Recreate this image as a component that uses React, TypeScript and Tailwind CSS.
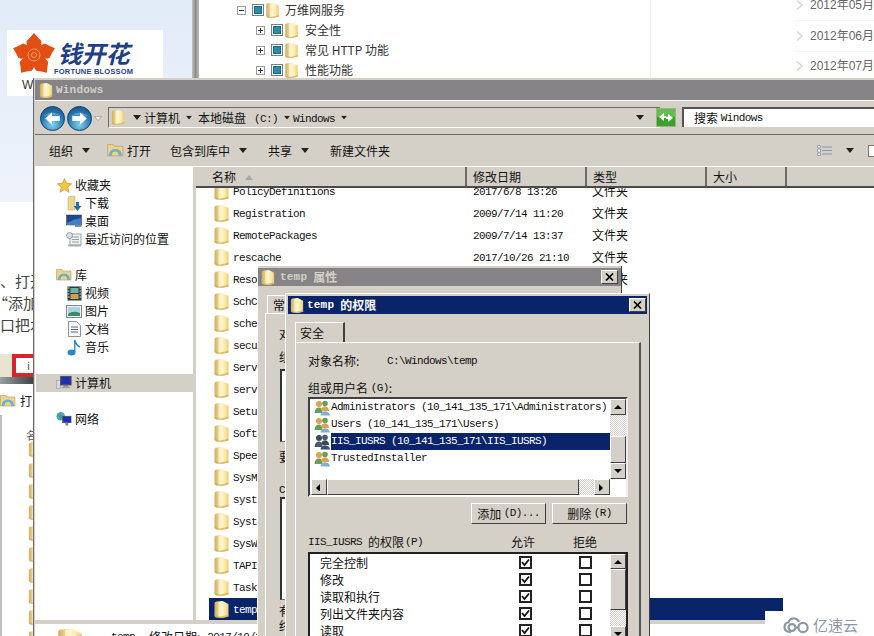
import React, { useId } from "react";

const mono = "font-['Liberation_Mono','Noto_Sans_CJK_SC',monospace] text-[11px] tracking-[-0.6px]";
const titleMono = "font-['Liberation_Mono','Noto_Sans_CJK_SC',monospace] text-[11px] font-bold tracking-[0.2px]";
const raised = "border border-t-white border-l-white border-r-[#404040] border-b-[#404040] bg-[#d4d0c8]";
const dither = "bg-[repeating-conic-gradient(#d4d0c8_0_25%,#ffffff_0_50%)] bg-[length:2px_2px]";

function L({ children, className = "" }: { children: React.ReactNode; className?: string }) {
  return <span className={`${mono} ${className}`}>{children}</span>;
}

function Folder({ w = 17, h = 19 }: { w?: number; h?: number }) {
  const id = useId();
  return (
    <svg width={w} height={h} viewBox="0 0 16 19" className="shrink-0">
      <defs>
        <linearGradient id={id} x1="0" x2="1" y1="0" y2="0">
          <stop offset="0" stopColor="#d0ae60" />
          <stop offset="0.28" stopColor="#ead08a" />
          <stop offset="0.5" stopColor="#fdf4c8" />
          <stop offset="0.75" stopColor="#faeaaa" />
          <stop offset="1" stopColor="#edca74" />
        </linearGradient>
      </defs>
      <path d="M1 3.5Q1 1.5 3 1.5L9 1L15 4V16.5L9 18L3 17.5Q1 17.5 1 15.5Z" fill={`url(#${id})`} />
      <path d="M1 14.5Q6 18 15 14.5V16.5L9 18L3 17.5Q1 17 1 15Z" fill="#d2ac52" opacity=".7" />
      <path d="M5 2L9 1V16L5 17Z" fill="#fff8d8" opacity=".6" />
    </svg>
  );
}

function CloseBtn({ className = "" }: { className?: string }) {
  return (
    <div className={`${raised} w-[17px] h-[14px] flex items-center justify-center shrink-0 ${className}`}>
      <svg width="9" height="8" viewBox="0 0 9 8">
        <path d="M1 0.5L8 7.5M8 0.5L1 7.5" stroke="#000" strokeWidth="1.6" />
      </svg>
    </div>
  );
}

function Tri({ dir }: { dir: "up" | "down" | "left" | "right" }) {
  const d = { up: "M0 5L4 1L8 5Z", down: "M0 1L8 1L4 5Z", left: "M5 0V8L1 4Z", right: "M1 0V8L5 4Z" }[dir];
  return (
    <svg width="8" height="8" viewBox="0 0 8 6">
      <path d={d} fill="#000" />
    </svg>
  );
}

function SBtn({ dir, className = "" }: { dir: "up" | "down" | "left" | "right"; className?: string }) {
  return <div className={`${raised} flex items-center justify-center shrink-0 ${className}`}><Tri dir={dir} /></div>;
}

function Caret() {
  return (
    <svg width="8" height="5" viewBox="0 0 8 5" className="shrink-0">
      <path d="M0 0H8L4 5Z" fill="#222" />
    </svg>
  );
}

function TreeCheck() {
  return (
    <span className="w-[12px] h-[12px] border border-[#6f7f8c] bg-white p-[1px] shrink-0 flex">
      <span className="flex-1 bg-[#2f8aa8] border border-[#1b6a88]" />
    </span>
  );
}

function Expander({ minus }: { minus?: boolean }) {
  return (
    <span className="w-[9px] h-[9px] border border-[#9a9a9a] bg-white shrink-0 flex items-center justify-center relative">
      <svg width="7" height="7" viewBox="0 0 7 7">
        <path d={minus ? "M1 3.5H6" : "M1 3.5H6M3.5 1V6"} stroke="#333" strokeWidth="1" />
      </svg>
    </span>
  );
}

function TreeRow({ label, top }: { label: React.ReactNode; top?: boolean }) {
  return (
    <div className={`h-[20px] shrink-0 flex items-center text-[12px] text-[#333] ${top ? "pl-[38px]" : "pl-[57px]"}`}>
      <Expander minus={top} />
      <span className="ml-[6px]"><TreeCheck /></span>
      <span className="ml-[1px]"><Folder w={15} h={17} /></span>
      <span className={top ? "ml-[5px]" : "ml-[6px]"}>{label}</span>
    </div>
  );
}

function NavArrow({ flip }: { flip?: boolean }) {
  const id = useId();
  return (
    <svg width="25" height="25" viewBox="0 0 26 26" className="shrink-0">
      <defs>
        <radialGradient id={id} cx="0.5" cy="0.75" r="0.8">
          <stop offset="0" stopColor="#7fd3f0" />
          <stop offset="0.55" stopColor="#2a7fb8" />
          <stop offset="1" stopColor="#1a4d86" />
        </radialGradient>
      </defs>
      <circle cx="13" cy="13" r="12.5" fill={`url(#${id})`} stroke="#16406f" />
      <path d="M3 11Q13 3 23 11Q13 7 3 11Z" fill="#fff" opacity=".25" />
      <path
        transform={flip ? "rotate(180 13 13)" : undefined}
        d="M5.5 13L12.5 6.5V10.5H20.5V15.5H12.5V19.5Z"
        fill="#fff"
      />
    </svg>
  );
}

function Star() {
  return (
    <svg width="15" height="15" viewBox="0 0 15 15">
      <path d="M7.5 0.5L9.6 5.3L14.7 5.8L10.8 9.2L12 14.3L7.5 11.6L3 14.3L4.2 9.2L0.3 5.8L5.4 5.3Z" fill="#f4c544" stroke="#c4862a" strokeWidth=".6" />
    </svg>
  );
}
function DownloadIcon() {
  return (
    <svg width="15" height="17" viewBox="0 0 15 17">
      <path d="M1 2L8 1V15H1Z" fill="#ecd88c" stroke="#c9a24e" strokeWidth=".5" />
      <path d="M9 7H12V11H14.5L10.5 16L6.5 11H9Z" fill="#1f6fb8" />
    </svg>
  );
}
function DesktopIcon() {
  return (
    <svg width="16" height="14" viewBox="0 0 16 14">
      <rect x="0.5" y="1" width="15" height="10" fill="#20488c" stroke="#334" strokeWidth=".5" />
      <path d="M1 9Q8 5 15 4V11H1Z" fill="#3f7fc8" />
      <rect x="9" y="11" width="6.5" height="2" fill="#7a8a9c" />
    </svg>
  );
}
function RecentIcon() {
  return (
    <svg width="16" height="15" viewBox="0 0 16 15">
      <rect x="4" y="2" width="11" height="11" fill="#f0f2f2" stroke="#8a9498" strokeWidth=".8" />
      <path d="M6 5H13M6 7.5H13M6 10H13" stroke="#8fa0a8" />
      <circle cx="3.5" cy="3.5" r="3" fill="#d9dfe0" stroke="#7d878c" strokeWidth=".7" />
      <rect x="2" y="12.5" width="13" height="2" fill="#a8b0b0" />
    </svg>
  );
}
function LibraryIcon() {
  return (
    <svg width="16" height="14" viewBox="0 0 16 14">
      <path d="M0.5 3V1.5H6L7 3H15V12H0.5Z" fill="#ecd48a" stroke="#b89a50" strokeWidth=".6" />
      <path d="M1.5 12Q2 5.5 8 5.5Q14 5.5 14 12H11Q11 8 8 8Q4.5 8 4.5 12Z" fill="#6fb0cf" />
    </svg>
  );
}
function VideoIcon() {
  return (
    <svg width="15" height="15" viewBox="0 0 15 15">
      <rect x="0.5" y="0.5" width="14" height="14" fill="#2c3a44" />
      <rect x="3.5" y="2" width="8" height="5" fill="#6fb4a0" />
      <rect x="3.5" y="8" width="8" height="5" fill="#d0a050" />
      <path d="M1 2H2.5M1 5H2.5M1 8H2.5M1 11H2.5M12.5 2H14M12.5 5H14M12.5 8H14M12.5 11H14" stroke="#e6e6e6" />
    </svg>
  );
}
function PictureIcon() {
  return (
    <svg width="16" height="13" viewBox="0 0 16 13">
      <rect x="0.5" y="0.5" width="15" height="12" fill="#eef2f2" stroke="#7d878c" />
      <rect x="2" y="2" width="12" height="9" fill="#a9d4e8" />
      <path d="M2 9Q7 5 14 8V11H2Z" fill="#3f8a62" />
    </svg>
  );
}
function DocIcon() {
  return (
    <svg width="13" height="16" viewBox="0 0 13 16">
      <path d="M0.5 0.5H8.5L12.5 4.5V15.5H0.5Z" fill="#f7f8f8" stroke="#8a9498" />
      <path d="M3 6H10M3 8.5H10M3 11H10" stroke="#5a6a7c" />
    </svg>
  );
}
function MusicIcon() {
  return (
    <svg width="14" height="17" viewBox="0 0 14 17">
      <ellipse cx="4.5" cy="13.5" rx="4" ry="3" fill="#2a86c8" />
      <path d="M7.8 13V1Q9 6 13 8" stroke="#2a86c8" strokeWidth="1.4" fill="none" />
    </svg>
  );
}
function ComputerIcon() {
  return (
    <svg width="17" height="16" viewBox="0 0 17 16">
      <rect x="0.5" y="5" width="4" height="9" fill="#d8d8d8" stroke="#888" strokeWidth=".5" />
      <rect x="5" y="1" width="11" height="9" fill="#1e2fb0" stroke="#4a4a5a" />
      <rect x="8" y="10" width="5" height="2" fill="#7a7f8c" />
      <rect x="6" y="12" width="9" height="1.5" fill="#9aa0aa" />
    </svg>
  );
}
function NetworkIcon() {
  return (
    <svg width="17" height="16" viewBox="0 0 17 16">
      <circle cx="5" cy="5" r="4.5" fill="#4aa0d8" />
      <path d="M2 3Q5 2 6 5T4 8Z" fill="#4aa84a" />
      <rect x="7" y="5" width="9" height="7" fill="#1e2fb0" stroke="#555" strokeWidth=".6" />
      <rect x="10" y="12" width="3" height="3" fill="#7a8a9c" />
    </svg>
  );
}

function NavRow({ icon, label, indent }: { icon: React.ReactNode; label: string; indent?: boolean }) {
  return (
    <div className={`h-[18px] flex items-center text-[12px] text-[#111] ${indent ? "pl-[30px]" : "pl-[20px]"}`}>
      <span className="w-[16px] flex justify-center">{icon}</span>
      <span className={indent ? "ml-[3px]" : "ml-[3px]"}>{label}</span>
    </div>
  );
}

function FileRow({ name, date, type, selected }: { name: string; date?: string; type?: string; selected?: boolean }) {
  return (
    <div className={`h-[22px] w-[574px] flex items-center shrink-0 ${selected ? "bg-[#0a246a] text-white" : "text-[#111]"}`}>
      <span className="ml-[4px]"><Folder /></span>
      <span className="ml-[3px] w-[240px]"><L>{name}</L></span>
      {date && <span className="w-[119px]"><L>{date}</L></span>}
      {type && <span className="text-[12px]">{type}</span>}
    </div>
  );
}

function ColHead({ label, w, pl = 6, children }: { label: string; w: number; pl?: number; children?: React.ReactNode }) {
  return (
    <div style={{ width: w, paddingLeft: pl }} className="h-full flex items-center pt-[1px] text-[12px] text-[#111] border-r-2 border-r-[#6c6a66] shrink-0">
      {label}
      {children}
    </div>
  );
}

function Users({ dark }: { dark?: boolean }) {
  const a = dark ? "#3c4a58" : "#d9a350";
  const b = dark ? "#4a5870" : "#6a9e58";
  const c = dark ? "#33506e" : "#7fb0d0";
  return (
    <svg width="17" height="16" viewBox="0 0 17 16" className="shrink-0">
      <circle cx="5" cy="4" r="3" fill={a} />
      <path d="M0.5 13Q1 7.5 5 7.5Q8 7.5 8.5 12V13Z" fill={b} />
      <circle cx="11" cy="3.5" r="2.8" fill={b} />
      <path d="M7 10Q7.5 6.5 11 6.5Q15 6.5 15 11H9Z" fill={a} />
      <circle cx="11" cy="9" r="2.5" fill={a} />
      <path d="M6.5 15.5Q7 11.5 11 11.5Q15.5 11.5 16 15.5Z" fill={c} />
    </svg>
  );
}

function UserRow({ name, selected, dark }: { name: string; selected?: boolean; dark?: boolean }) {
  return (
    <div className="h-[17px] flex items-center pl-[4px]">
      <Users dark={dark} />
      <div className={`flex-1 h-full flex items-center ${selected ? "bg-[#0a246a] text-white" : "text-[#111]"}`}>
        <L>{name}</L>
      </div>
    </div>
  );
}

function Box({ checked }: { checked?: boolean }) {
  return (
    <span className="w-[13px] h-[13px] border-2 border-[#222] bg-white flex items-center justify-center shrink-0">
      {checked && (
        <svg width="9" height="9" viewBox="0 0 9 9">
          <path d="M1 4L3.5 7L8 1.5" fill="none" stroke="#111" strokeWidth="1.8" />
        </svg>
      )}
    </span>
  );
}

function PermRow({ label }: { label: string }) {
  return (
    <div className="h-[17px] shrink-0 flex items-center text-[12px] text-[#111]">
      <span className="w-[209px] pl-[10px]">{label}</span>
      <Box checked />
      <span className="ml-[47px]"><Box /></span>
    </div>
  );
}

function Flower() {
  return (
    <svg width="46" height="46" viewBox="0 0 46 46" className="shrink-0">
      {[0, 72, 144, 216, 288].map((r) => (
        <path key={r} transform={`rotate(${r} 23 23)`} d="M23 23Q15 16 15.5 9Q19 6 23 1Q27 6 30.5 9Q31 16 23 23Z" fill="#e34f12" />
      ))}
      <circle cx="23" cy="23" r="6" fill="#e34f12" stroke="#f6a26e" strokeWidth="1" />
      <circle cx="23" cy="23" r="2.5" fill="none" stroke="#f6a26e" strokeWidth="1" />
    </svg>
  );
}

function CloudLogo() {
  return (
    <svg width="27" height="17" viewBox="0 0 27 17" className="shrink-0">
      <path d="M8 15Q1.5 15 1.5 10Q1.5 6 5.5 5.5Q7 1 11.5 1.5Q15 2 16 5" fill="none" stroke="#8e97a6" strokeWidth="2.2" />
      <circle cx="9" cy="10.5" r="3.4" fill="none" stroke="#8e97a6" strokeWidth="2.2" />
      <circle cx="20" cy="10.5" r="4.6" fill="none" stroke="#8e97a6" strokeWidth="2.2" />
      <path d="M12 10.5H15.5" stroke="#8e97a6" strokeWidth="2.2" />
    </svg>
  );
}

export default function App() {
  return (
    <div className="relative w-[874px] h-[636px] overflow-hidden bg-white font-['Noto_Sans_CJK_SC',sans-serif] text-[12px] leading-none">
      {/* page behind */}
      <div className="absolute left-0 top-0 w-[192px] h-[636px] flex flex-col bg-white">
        <div className="h-[202px] bg-gradient-to-b from-[#e2ebf8] to-[#eef3fb] shrink-0 pt-[30px] pl-[7px]">
          <div className="w-[156px] h-[66px] bg-white flex items-start pl-[4px] pt-[2px] relative">
            <Flower />
            <div className="-ml-[3px] flex flex-col items-center">
              <span className="mt-[8px] text-[24px] leading-[26px] font-bold italic text-[#1f3f88]">钱开花</span>
              <span className="mt-[1px] text-[7.5px] leading-[9px] font-bold font-['Liberation_Sans',sans-serif] text-[#27458e] tracking-[0.2px] whitespace-nowrap">FORTUNE BLOSSOM</span>
            </div>
            <span className="absolute left-[15px] top-[49px] text-[12px] text-[#333] font-['Liberation_Sans',sans-serif]">W</span>
          </div>
        </div>
        <div className="pt-[68px] text-[15px] leading-[22px] text-[#444] whitespace-nowrap flex flex-col">
          <span>、打开</span>
          <span className="-ml-[7px]">“添加</span>
          <span>口把本</span>
        </div>
        <div className="mt-[18px] h-[23px] w-[33px] flex bg-[#e8e4d0] shrink-0">
          <span className="w-[12px] h-full" />
          <span className="flex-1 border-[4px] border-r-0 border-[#d9232e] bg-white pl-[11px] text-[11px] text-[#555] pt-[2px]">i</span>
        </div>
        <div className="h-[7px] w-[33px] bg-gradient-to-r from-[#99a2a0] to-[#3c4644] shrink-0" />
        <div className="mt-[6px] h-[22px] flex items-center text-[12px] text-[#222] shrink-0">
          <LibraryIcon />
          <span className="ml-[4px]">打</span>
        </div>
        <div className="flex flex-col pl-[26px] pt-[15px] border-l-2 border-l-[#c0c0c0] mt-[3px]">
          <span className="text-[11px] text-[#555] ml-[-2px] mb-[3px] h-[8px]">名</span>
          {[0, 1, 2, 3, 4, 5, 6, 7, 8, 9].map((i) => (
            <span key={i} className="h-[21px]"><Folder w={14} h={17} /></span>
          ))}
        </div>
      </div>

      <div className="absolute left-[192px] top-0 h-[78px] w-[7px] bg-gradient-to-r from-[#c0c0c0] via-[#8d8d8d] to-[#bcbcbc]" />

      <div className="absolute left-[199px] top-0 h-[78px] w-[675px] flex overflow-hidden">
        <div className="w-[458px] border-r border-r-[#eeeeee] flex flex-col">
          <TreeRow top label="万维网服务" />
          <TreeRow label="安全性" />
          <TreeRow label={<span>常见 HTTP 功能</span>} />
          <TreeRow label="性能功能" />
        </div>
        <div className="flex-1 pl-[145px] flex flex-col text-[12px] text-[#666] font-['Liberation_Sans','Noto_Sans_CJK_SC',sans-serif]">
          {["2012年05月", "2012年06月", "2012年07月"].map((t, i) => (
            <div key={t} className={`h-[30.5px] shrink-0 flex items-center gap-[7px] border-b border-b-[#f2f2f2] ${i === 0 ? "-mt-[9.5px]" : ""}`}>
              <svg width="7" height="10" viewBox="0 0 7 10"><path d="M1 0.5L6 5L1 9.5" fill="none" stroke="#d6d6d6" strokeWidth="1.5" /></svg>
              <span className="whitespace-nowrap">{t}</span>
            </div>
          ))}
        </div>
      </div>

      {/* Explorer window */}
      <div className="absolute left-[33px] top-[78px] w-[860px] h-[570px] border-l border-l-[#6c6a66] bg-[#d4d0c8] flex flex-col">
        <div className="h-[2px] bg-[#d4d0c8] shrink-0" />
        <div className="h-[20px] bg-[#858385] flex items-center pl-[4px] shrink-0 ml-[1px]">
          <Folder w={14} h={17} />
          <span className={`ml-[3px] text-[#d4d0c8] ${titleMono}`}>Windows</span>
        </div>
        {/* address */}
        <div className="h-[35px] shrink-0 border-t border-t-white border-b border-b-[#6c6a66] flex items-start pt-[6px] pl-[5px] ml-[1px]">
          <div className="flex items-center -mt-[1px] h-[24px]">
            <NavArrow />
            <span className="ml-[2px]"><NavArrow flip /></span>
            <svg width="8" height="5" viewBox="0 0 8 5" className="ml-[2px]"><path d="M0.5 0.5H7.5L4 4.5Z" fill="#eeeeee" stroke="#888" strokeWidth=".6" /></svg>
          </div>
          <div className="ml-[6px] w-[552px] h-[21px] border-l border-l-[#6c6a66] border-t border-t-[#6c6a66] border-b border-b-white flex items-center pl-[2px] text-[12px] text-[#111]">
            <Folder w={14} h={17} />
            <span className="ml-[8px]"><Caret /></span>
            <span className="ml-[3px]">计算机</span>
            <span className="ml-[5px] scale-75"><Caret /></span>
            <span className="ml-[5px]">本地磁盘</span>
            <span className="ml-[8px]"><L>(C:)</L></span>
            <span className="ml-[5px] scale-75"><Caret /></span>
            <span className="ml-[2px]"><L>Windows</L></span>
            <span className="ml-[5px] scale-75"><Caret /></span>
            <span className="ml-auto mr-[16px]"><Caret /></span>
          </div>
          <svg width="20" height="19" viewBox="0 0 20 19" className="ml-[-4px] mt-[1px] shrink-0">
            <rect x="0.5" y="0.5" width="19" height="18" fill="#3aa02a" stroke="#9ab08a" />
            <rect x="1" y="1" width="18" height="8" fill="#7fd06a" opacity=".6" />
            <path d="M3 9L8 5V8H10V10H8V13ZM17 10L12 14V11H10V9H12V6Z" fill="#fff" />
          </svg>
          <div className="ml-[6px] w-[200px] h-[20px] border-l-2 border-t-2 border-l-[#555] border-t-[#555] bg-white flex items-center pl-[10px] text-[12px] text-[#111] shrink-0">
            搜索&nbsp;<L>Windows</L>
          </div>
        </div>
        {/* toolbar */}
        <div className="h-[31px] shrink-0 flex items-center pl-[14px] text-[12px] text-[#111] ml-[1px]">
          <span>组织</span>
          <span className="ml-[9px]"><Caret /></span>
          <span className="ml-[17px]">
            <svg width="17" height="15" viewBox="0 0 16 14"><path d="M0.5 3V1.5H6L7 3H15V12H0.5Z" fill="#ecd48a" stroke="#b89a50" strokeWidth=".6" /><path d="M1.5 12Q2 5.5 8 5.5Q14 5.5 14 12H11Q11 8 8 8Q4.5 8 4.5 12Z" fill="#6fb0cf" /></svg>
          </span>
          <span className="ml-[3px]">打开</span>
          <span className="ml-[19px]">包含到库中</span>
          <span className="ml-[9px]"><Caret /></span>
          <span className="ml-[21px]">共享</span>
          <span className="ml-[9px]"><Caret /></span>
          <span className="ml-[21px]">新建文件夹</span>
          <div className="ml-auto mr-[13px] flex items-center">
            <svg width="16" height="11" viewBox="0 0 16 11"><path d="M0.5 0.5H3.5V3H0.5ZM0.5 4H3.5V7H0.5ZM0.5 8H3.5V10.5H0.5Z" fill="#fff" stroke="#7a8a9c" strokeWidth=".7" /><path d="M5 2H15M5 5.5H15M5 9H15" stroke="#8a97a6" /></svg>
            <span className="ml-[13px]"><Caret /></span>
            <span className="ml-[14px] w-[12px] h-[12px] border border-[#777] bg-white" />
          </div>
        </div>
        {/* main */}
        <div className="h-[454px] shrink-0 flex bg-white border-t border-t-white ml-[1px] pl-[1px]">
          <div className="w-[157px] shrink-0 pt-[9px] flex flex-col">
            <NavRow icon={<Star />} label="收藏夹" />
            <NavRow indent icon={<DownloadIcon />} label="下载" />
            <NavRow indent icon={<DesktopIcon />} label="桌面" />
            <NavRow indent icon={<RecentIcon />} label="最近访问的位置" />
            <div className="h-[18px]" />
            <NavRow icon={<LibraryIcon />} label="库" />
            <NavRow indent icon={<VideoIcon />} label="视频" />
            <NavRow indent icon={<PictureIcon />} label="图片" />
            <NavRow indent icon={<DocIcon />} label="文档" />
            <NavRow indent icon={<MusicIcon />} label="音乐" />
            <div className="h-[18px]" />
            <div className="bg-[#d4d0c8]"><NavRow icon={<ComputerIcon />} label="计算机" /></div>
            <div className="h-[18px]" />
            <NavRow icon={<NetworkIcon />} label="网络" />
          </div>
          <div className="w-[3px] bg-[#d4d0c8] shrink-0" />
          <div className="flex-1 flex flex-col min-w-0">
            <div className="h-[21px] bg-[#d4d0c8] flex items-center shrink-0 border-b-2 border-b-[#4a4a4a] relative z-10">
              <ColHead label="名称" w={271} pl={16}>
                <svg width="8" height="5" viewBox="0 0 8 5" className="ml-[9px]"><path d="M0 5L4 0L8 5Z" fill="#a8a8a8" /></svg>
              </ColHead>
              <ColHead label="修改日期" w={120} />
              <ColHead label="类型" w={120} />
              <ColHead label="大小" w={80} />
            </div>
            <div className="flex-1 overflow-hidden pl-[13px] flex flex-col">
              <div className="-mt-[8px]" />
              <FileRow name="PolicyDefinitions" date="2017/6/8 13:26" type="文件夹" />
              <FileRow name="Registration" date="2009/7/14 11:20" type="文件夹" />
              <FileRow name="RemotePackages" date="2009/7/14 13:37" type="文件夹" />
              <FileRow name="rescache" date="2017/10/26 21:10" type="文件夹" />
              <FileRow name="Resources" date="2009/7/14 13:37" type="文件夹" />
              {["SchCache", "schemas", "security", "ServiceProfiles", "servicing", "Setup", "SoftwareDistribution", "Speech", "SysMsgs", "system", "System32", "SysWOW64", "TAPI", "Tasks"].map((n) => (
                <FileRow key={n} name={n} />
              ))}
              <FileRow name="temp" selected />
            </div>
          </div>
        </div>
        <div className="h-[4px] bg-[#d4d0c8] shrink-0" />
        <div className="flex-1 bg-white flex items-start pl-[21px] ml-[1px] pt-[3px]">
          <Folder w={28} h={32} />
          <span className="ml-[27px] mt-[4px] flex items-center text-[12px] text-[#111] whitespace-nowrap"><L>temp</L><span className="ml-[14px]">修改日期:</span><L className="ml-[7px]">2017/10/26</L></span>
        </div>
      </div>

      {/* Properties dialog */}
      <div className="absolute left-[257px] top-[266px] w-[365px] h-[380px] bg-[#d4d0c8] border-r border-r-[#404040] border-l border-l-white flex flex-col pt-[2px]">
        <div className="h-[18px] bg-[#858385] flex items-center pl-[3px] pr-[3px] shrink-0">
          <Folder w={14} h={17} />
          <span className="ml-[5px] text-[#d4d0c8] font-bold flex items-center text-[12px]"><span className={titleMono}>temp</span><span className="ml-[6px]">属性</span></span>
          <CloseBtn className="ml-auto" />
        </div>
        <div className="pl-[9px] mt-[9px] shrink-0">
          <div className="w-[40px] h-[18px] border-t border-l border-t-white border-l-white pl-[5px] flex items-center text-[12px] text-[#111]">常规</div>
        </div>
        <div className="mx-[7px] flex-1 border-t border-l border-t-white border-l-white pl-[13px] flex flex-col text-[12px] text-[#111]">
          <span className="mt-[13px] h-[14px] leading-[14px]">对象名称:</span>
          <span className="mt-[9px] h-[14px] leading-[14px]">组或用户名(G):</span>
          <div className="mt-[5px] h-[73px] w-[300px] ml-[1px] border-l-2 border-t-2 border-l-[#333] border-t-[#333] bg-white border-b border-b-[#777]" />
          <span className="mt-[8px] h-[14px] leading-[14px]">要更改权限,请单击"编辑"。</span>
          <span className="mt-[17px] h-[14px] leading-[14px]"><L>CREATOR OWNER</L> 的权限</span>
          <div className="mt-[2px] h-[103px] w-[300px] ml-[1px] border-l-2 border-t-2 border-b border-l-[#333] border-t-[#333] border-b-[#777] bg-white" />
          <span className="mt-[3px] h-[15px] leading-[15px]">有关特殊权限或高级设置,请单击</span>
          <span className="h-[15px] leading-[15px]">终"高级"。</span>
        </div>
      </div>

      {/* Permissions dialog */}
      <div className="absolute left-[285px] top-[293px] w-[365px] h-[360px] bg-[#d4d0c8] border-t border-t-white border-l border-l-white border-r border-r-[#404040] p-[2px] flex flex-col">
        <div className="h-[18px] bg-[#0a246a] flex items-center pl-[2px] pr-[1px] text-white font-bold shrink-0">
          <Folder w={14} h={17} />
          <span className="ml-[3px] flex items-center text-[12px]"><span className={titleMono}>temp</span><span className="ml-[6px]">的权限</span></span>
          <CloseBtn className="ml-auto" />
        </div>
        <div className="pl-[7px] mt-[8px] shrink-0">
          <div className="w-[50px] h-[20px] border-t border-l border-r-2 border-t-white border-l-white border-r-[#404040] pl-[4px] flex items-center text-[12px] text-[#111]">安全</div>
        </div>
        <div className="ml-[7px] mr-[6px] flex-1 border-t border-l border-r-2 border-t-white border-l-white border-r-[#555] pl-[12px] flex flex-col text-[12px] text-[#111]">
          <div className="mt-[10px] h-[16px] flex items-center">
            <span className="w-[79px]">对象名称:</span>
            <L>C:\Windows\temp</L>
          </div>
          <div className="mt-[11px] h-[16px] flex items-center">组或用户名&nbsp;<L>(G)</L>:</div>
          {/* users list */}
          <div className="mt-[1px] w-[320px] h-[100px] shrink-0 border-2 border-t-[#404040] border-l-[#404040] border-r-[#eeeeee] border-b-white bg-white flex flex-col">
            <div className="flex h-[80px] shrink-0">
              <div className="flex-1 min-w-0 overflow-hidden flex flex-col">
                <UserRow name="Administrators (10_141_135_171\Administrators)" />
                <UserRow name="Users (10_141_135_171\Users)" />
                <UserRow dark selected name="IIS_IUSRS (10_141_135_171\IIS_IUSRS)" />
                <UserRow name="TrustedInstaller" />
              </div>
              <div className="w-[16px] flex flex-col shrink-0">
                <SBtn dir="up" className="h-[16px]" />
                <div className={`h-[21px] ${dither}`} />
                <div className={`${raised} h-[27px]`} />
                <SBtn dir="down" className="h-[16px]" />
              </div>
            </div>
            <div className="flex h-[16px] shrink-0 pr-[16px]">
              <SBtn dir="left" className="w-[16px] ml-[1px]" />
              <div className={`${raised} flex-1`} />
              <div className={`w-[15px] ${dither}`} />
              <SBtn dir="right" className="w-[16px]" />
            </div>
          </div>
          <div className="mt-[6px] flex gap-[6px] pl-[163px] shrink-0">
            <div className={`${raised} w-[75px] h-[21px] flex items-center justify-center text-[12px]`}>添加&nbsp;<L>(D)...</L></div>
            <div className={`${raised} w-[75px] h-[21px] flex items-center justify-center text-[12px]`}>删除&nbsp;<L>(R)</L></div>
          </div>
          <div className="mt-[10px] h-[16px] flex items-center shrink-0">
            <span className="w-[203px] flex items-center"><L>IIS_IUSRS</L><span className="ml-[6px]">的权限</span><L className="ml-[1px]">(P)</L></span>
            <span className="w-[62px]">允许</span>
            <span>拒绝</span>
          </div>
          <div className="mt-[2px] w-[320px] h-[100px] shrink-0 border-2 border-t-[#222] border-l-[#222] border-r-[#222] bg-white flex">
            <div className="flex-1 flex flex-col">
              <PermRow label="完全控制" />
              <PermRow label="修改" />
              <PermRow label="读取和执行" />
              <PermRow label="列出文件夹内容" />
              <PermRow label="读取" />
            </div>
            <div className="w-[16px] flex flex-col shrink-0">
              <SBtn dir="up" className="h-[15px]" />
              <div className={`${raised} h-[41px]`} />
              <div className={`h-[16px] ${dither}`} />
              <SBtn dir="down" className="h-[16px]" />
            </div>
          </div>
        </div>
      </div>

      {/* Watermark */}
      <div className="absolute left-[765px] top-[611px] w-[109px] h-[25px] bg-white flex items-center pl-[18px] pt-[3px]">
        <CloudLogo />
        <span className="ml-[3px] text-[15px] leading-[18px] text-[#8e97a6]">亿速云</span>
      </div>
    </div>
  );
}
